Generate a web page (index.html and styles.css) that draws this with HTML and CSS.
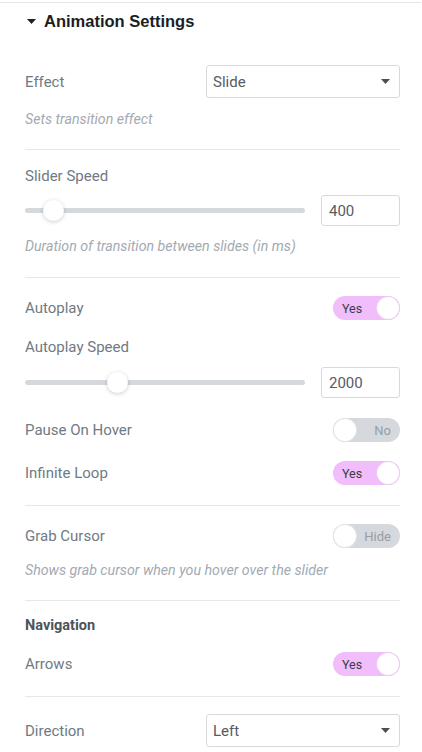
FILE: index.html
```html
<!DOCTYPE html>
<html lang="en">
<head>
<meta charset="utf-8">
<title>Animation Settings</title>
<link rel="stylesheet" href="styles.css">
</head>
<body>
<div class="panel">
  <div class="panel-head">
    <svg class="caret" width="9" height="5" viewBox="0 0 9 5"><path d="M0 0H9L4.5 5Z" fill="#1f2124"/></svg>
    <span class="panel-title">Animation Settings</span>
  </div>
  <div class="panel-body">
    <div class="section s1">
      <div class="control">
        <span class="label">Effect</span>
        <div class="select"><span>Slide</span><svg width="9" height="5" viewBox="0 0 9 5"><path d="M0 0H9L4.5 5Z" fill="#4a4f55"/></svg></div>
      </div>
      <p class="help help-1">Sets transition effect</p>
    </div>
    <div class="section s2">
      <span class="label line">Slider Speed</span>
      <div class="slider-row sr-1">
        <div class="track"><span class="thumb" style="left:10%"></span></div>
        <div class="num">400</div>
      </div>
      <p class="help help-2">Duration of transition between slides (in ms)</p>
    </div>
    <div class="section s3">
      <div class="control toggle-row">
        <span class="label">Autoplay</span>
        <span class="switch on"><span class="switch-text">Yes</span><span class="knob"></span></span>
      </div>
      <span class="label line mt-auto">Autoplay Speed</span>
      <div class="slider-row sr-2">
        <div class="track"><span class="thumb" style="left:33.1%"></span></div>
        <div class="num">2000</div>
      </div>
      <div class="control toggle-row mt-pause">
        <span class="label">Pause On Hover</span>
        <span class="switch off"><span class="knob"></span><span class="switch-text">No</span></span>
      </div>
      <div class="control toggle-row mt-loop">
        <span class="label">Infinite Loop</span>
        <span class="switch on"><span class="switch-text">Yes</span><span class="knob"></span></span>
      </div>
    </div>
    <div class="section s4">
      <div class="control toggle-row">
        <span class="label">Grab Cursor</span>
        <span class="switch off"><span class="knob"></span><span class="switch-text">Hide</span></span>
      </div>
      <p class="help help-3">Shows grab cursor when you hover over the slider</p>
    </div>
    <div class="section s5">
      <span class="subhead line">Navigation</span>
      <div class="control toggle-row mt-arrows">
        <span class="label">Arrows</span>
        <span class="switch on"><span class="switch-text">Yes</span><span class="knob"></span></span>
      </div>
    </div>
    <div class="section s6">
      <div class="control">
        <span class="label">Direction</span>
        <div class="select"><span>Left</span><svg width="9" height="5" viewBox="0 0 9 5"><path d="M0 0H9L4.5 5Z" fill="#4a4f55"/></svg></div>
      </div>
    </div>
  </div>
</div>
</body>
</html>
```

FILE: styles.css
```css
* { box-sizing: border-box; }
html, body { margin: 0; padding: 0; background: #ffffff; }
body { font-family: Roboto, "Noto Sans", Arial, sans-serif; color: #6d7882; }

.panel {
  margin-top: 2px;
  border-top: 1px solid #e6e6e6;
  width: 421px;
}
.panel-head {
  height: 36px;
  display: flex;
  align-items: center;
  padding-left: 27px;
  gap: 8px;
}
.caret { display: block; }
.panel-title {
  font-family: "Liberation Sans", Arial, sans-serif;
  font-weight: 700;
  font-size: 16.5px;
  color: #1c1d1f;
}
.panel-body { padding: 0 21px 0 25px; }

.section {
  display: flex;
  flex-direction: column;
  border-bottom: 1px solid #e6e8ea;
}
.s1 { padding: 26px 0 22px; }
.s2 { padding: 17px 0 23px; }
.s3 { padding: 18px 0 20px; }
.s4 { padding: 18px 0 22px; }
.s5 { padding: 16px 0 20px; }
.s6 { padding: 17px 0 0; border-bottom: none; }

.control {
  display: flex;
  align-items: center;
  justify-content: space-between;
}
.toggle-row { height: 24px; }
.label { font-size: 15px; color: #6f7a84; }
.line { line-height: 18px; height: 18px; }
.subhead { font-size: 14.5px; font-weight: 700; color: #4c545b; }

.select {
  width: 194px;
  height: 33px;
  border: 1px solid #d5dadf;
  border-radius: 3px;
  display: flex;
  align-items: center;
  justify-content: space-between;
  padding: 0 9px 0 6px;
  font-size: 15px;
  color: #555c63;
}
.select svg { display: block; }

.help {
  margin: 0;
  font-size: 14.2px;
  font-style: italic;
  line-height: 16px;
  color: #a3aab2;
}
.help-1 { margin-top: 13px; }
.help-2 { margin-top: 12px; }
.help-3 { margin-top: 14px; }

.slider-row {
  display: flex;
  align-items: center;
  gap: 16px;
}
.sr-1 { margin-top: 10px; }
.sr-2 { margin-top: 11px; }
.track {
  position: relative;
  flex: 1;
  height: 5px;
  border-radius: 3px;
  background: #d5d8dc;
}
.thumb {
  position: absolute;
  top: 50%;
  width: 21px;
  height: 21px;
  margin: -10.5px 0 0 -10.5px;
  border-radius: 50%;
  background: #ffffff;
  box-shadow: 0 1px 4px rgba(0, 0, 0, 0.2);
}
.num {
  width: 79px;
  height: 31px;
  border: 1px solid #d5dadf;
  border-radius: 3px;
  display: flex;
  align-items: center;
  padding-left: 7px;
  font-size: 15px;
  color: #555c63;
}

.mt-auto { margin-top: 18px; }
.mt-pause { margin-top: 20px; }
.mt-loop { margin-top: 19px; }
.mt-arrows { margin-top: 17px; }

.switch {
  width: 67px;
  height: 24px;
  border-radius: 12px;
  display: flex;
  align-items: center;
  justify-content: space-between;
  font-size: 12.5px;
  padding: 0 1px;
}
.switch.on { background: #f1bdfa; padding-left: 9px; }
.switch.off { background: #d5d8dc; padding-right: 9px; }
.switch.on .switch-text { color: #3a3d42; }
.switch.off .switch-text { color: #979ea6; font-size: 13px; }
.knob {
  width: 22px;
  height: 22px;
  border-radius: 50%;
  background: #ffffff;
}
.switch.on .knob { box-shadow: 0 0 0 1px #eccbf3; }
.switch.off .knob { box-shadow: 0 0 0 1px #e2e4e7; }
```
